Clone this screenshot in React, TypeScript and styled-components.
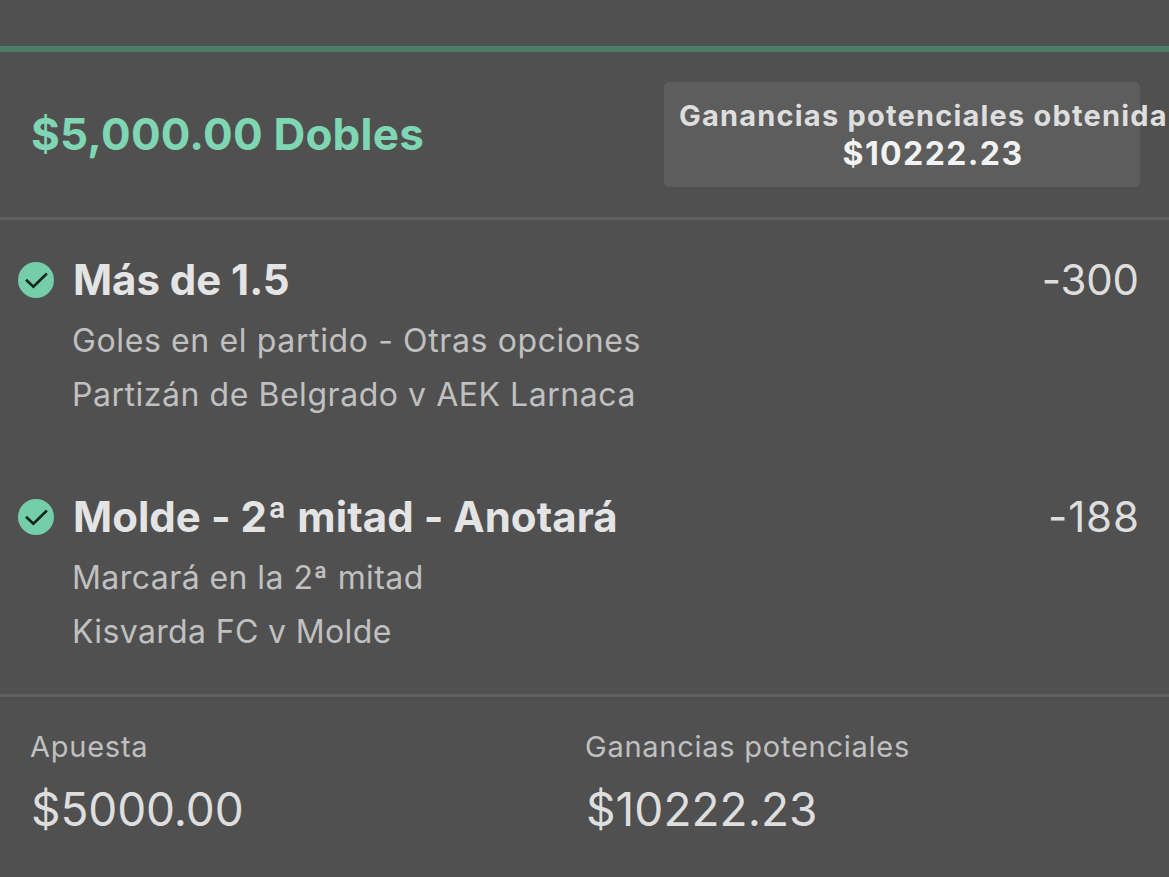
import React from 'react';
import styled, { createGlobalStyle } from 'styled-components';

const v = {
	bg: '#505050',
	line: '#5f5f5f',
	green: '#7fd6b3',
	white: '#e4e4e4',
	light: '#dedede',
	grey: '#c0c0c0',
	font: "Inter, 'Liberation Sans', sans-serif",
};

type TextProps = {
	$size: number;
	$spacing: number;
};

type Selection = {
	name: string;
	nameSpacing: number;
	market: string;
	marketSpacing: number;
	fixture: string;
	fixtureSpacing: number;
	odds: string;
	oddsSpacing: number;
};

const selections: Selection[] = [
	{
		name: 'Más de 1.5',
		nameSpacing: -0.05,
		market: 'Goles en el partido - Otras opciones',
		marketSpacing: 0.62,
		fixture: 'Partizán de Belgrado v AEK Larnaca',
		fixtureSpacing: 0.54,
		odds: '-300',
		oddsSpacing: -0.2,
	},
	{
		name: 'Molde - 2ª mitad - Anotará',
		nameSpacing: 0.03,
		market: 'Marcará en la 2ª mitad',
		marketSpacing: 0.44,
		fixture: 'Kisvarda FC v Molde',
		fixtureSpacing: 0.36,
		odds: '-188',
		oddsSpacing: 0.9,
	},
];

const GlobalStyle = createGlobalStyle`
	* {
		box-sizing: border-box;
	}

	body {
		margin: 0;
		background: ${v.bg};
		overflow: hidden;
	}
`;

const Slip = styled.main`
	width: 1169px;
	height: 877px;
	padding-top: 46px;
	overflow: hidden;
	background: ${v.bg};
	color: ${v.white};
	font-family: ${v.font};
	white-space: nowrap;
`;

const Header = styled.header`
	display: flex;
	justify-content: space-between;
	height: 174px;
	padding: 30px 29px 0 31px;
	border-top: 6px solid #4a7c67;
	border-bottom: 3px solid ${v.line};
`;

const Title = styled.h1<TextProps>`
	margin: 0;
	color: ${v.green};
	font-size: ${p => p.$size}px;
	font-weight: 700;
	letter-spacing: ${p => p.$spacing}px;
	line-height: 104px;
`;

const Winnings = styled.div`
	width: 476px;
	height: 105px;
	padding: 15px 0 0 15px;
	border-radius: 5px;
	background: #5d5d5d;
	font-weight: 700;
	line-height: 38px;
`;

const WinningsInner = styled.div`
	width: 508px;
	text-align: center;
`;

const WinningsLabel = styled.div<TextProps>`
	color: ${v.light};
	text-align: left;
	font-size: ${p => p.$size}px;
	letter-spacing: ${p => p.$spacing}px;
`;

const WinningsAmount = styled.div<TextProps>`
	color: #f2f2f2;
	font-size: ${p => p.$size}px;
	letter-spacing: ${p => p.$spacing}px;
`;

const Selections = styled.section`
	height: 477px;
	padding: 33px 30px 0 18px;
	border-bottom: 3px solid ${v.line};
`;

const Row = styled.article`
	display: grid;
	grid-template-columns: 54px 1fr auto;
	height: 237px;
`;

const Check = styled.svg`
	display: block;
	width: 36px;
	height: 36px;
	margin-top: 9px;
`;

const Name = styled.h2<TextProps>`
	margin: 0 0 7px 1px;
	font-size: ${p => p.$size}px;
	font-weight: 700;
	letter-spacing: ${p => p.$spacing}px;
	line-height: 54px;
`;

const Detail = styled.p<TextProps>`
	margin: 0;
	color: ${v.grey};
	font-size: ${p => p.$size}px;
	letter-spacing: ${p => p.$spacing}px;
	line-height: 54px;
`;

const Odds = styled.span<TextProps>`
	margin-right: ${p => -p.$spacing}px;
	color: ${v.light};
	font-size: ${p => p.$size}px;
	letter-spacing: ${p => p.$spacing}px;
	line-height: 54px;
`;

const Footer = styled.footer`
	display: grid;
	grid-template-columns: 555px 1fr;
	padding: 30px 0 0 30px;
`;

const FooterLabel = styled.div<TextProps>`
	color: ${v.grey};
	font-size: ${p => p.$size}px;
	letter-spacing: ${p => p.$spacing}px;
	line-height: 40px;
`;

const FooterAmount = styled.div<TextProps>`
	margin: 12px 0 0 1px;
	color: ${v.light};
	font-size: ${p => p.$size}px;
	letter-spacing: ${p => p.$spacing}px;
	line-height: 60px;
`;

const SelectionRow = ({ item }: { item: Selection }) => (
	<Row>
		<Check viewBox='0 0 36 36'>
			<circle cx='18' cy='18' r='18' fill='#75ceaa' />
			<path d='M8 17.8L15.4 24.8L28.9 11.5' fill='none' stroke='#14241d' strokeWidth='2.6' />
		</Check>
		<div>
			<Name $size={42} $spacing={item.nameSpacing}>{item.name}</Name>
			<Detail $size={32} $spacing={item.marketSpacing}>{item.market}</Detail>
			<Detail $size={32} $spacing={item.fixtureSpacing}>{item.fixture}</Detail>
		</div>
		<Odds $size={42} $spacing={item.oddsSpacing}>{item.odds}</Odds>
	</Row>
);

export default function App() {
	return (
		<>
			<GlobalStyle />
			<Slip>
				<Header>
					<Title $size={44} $spacing={0.22}>$5,000.00 Dobles</Title>
					<Winnings>
						<WinningsInner>
							<WinningsLabel $size={29} $spacing={1.2}>Ganancias potenciales obtenida</WinningsLabel>
							<WinningsAmount $size={32} $spacing={1.4}>$10222.23</WinningsAmount>
						</WinningsInner>
					</Winnings>
				</Header>
				<Selections>
					{selections.map(item => (
						<SelectionRow key={item.name} item={item} />
					))}
				</Selections>
				<Footer>
					<div>
						<FooterLabel $size={29} $spacing={0.75}>Apuesta</FooterLabel>
						<FooterAmount $size={46} $spacing={-0.1}>$5000.00</FooterAmount>
					</div>
					<div>
						<FooterLabel $size={29} $spacing={0.75}>Ganancias potenciales</FooterLabel>
						<FooterAmount $size={46} $spacing={0.05}>$10222.23</FooterAmount>
					</div>
				</Footer>
			</Slip>
		</>
	);
}
